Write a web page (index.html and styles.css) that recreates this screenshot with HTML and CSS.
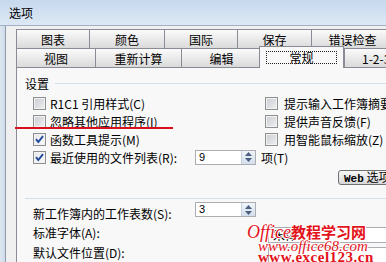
FILE: index.html
```html
<!DOCTYPE html>
<html lang="zh-CN">
<head>
<meta charset="utf-8">
<title>选项</title>
<link rel="stylesheet" href="styles.css">
</head>
<body>
<div class="titlebar">选项</div>
<div class="client">
  <div class="frame"></div>
  <div class="body">
    <div class="tabrow row1">
      <div class="tab t-chart">图表</div>
      <div class="tab t-color">颜色</div>
      <div class="tab t-intl">国际</div>
      <div class="tab t-save">保存</div>
      <div class="tab t-err">错误检查</div>
    </div>
    <div class="tabrow row2">
      <div class="tab t-view">视图</div>
      <div class="tab t-calc">重新计算</div>
      <div class="tab t-edit">编辑</div>
      <div class="tab active"><span class="focus">常规</span></div>
      <div class="tab t-123">1-2-3 的帮助</div>
    </div>
    <div class="panel">
      <div class="group-head"><span>设置</span><i class="rule"></i></div>
      <div class="opts">
        <div class="row">
          <div class="opt left"><span class="cb"></span>R1C1 引用样式(C)</div>
          <div class="opt right"><span class="cb"></span>提示输入工作簿摘要信息(P)</div>
        </div>
        <div class="row">
          <div class="opt left"><span class="cb"></span>忽略其他应用程序(I)</div>
          <div class="opt right"><span class="cb"></span>提供声音反馈(F)</div>
        </div>
        <div class="row">
          <div class="opt left"><span class="cb checked"><svg viewBox="0 0 13 13" width="13" height="13"><path d="M3 6.2 L5.3 9 L10 3.2" fill="none" stroke="#21479a" stroke-width="1.9"/></svg></span>函数工具提示(M)</div>
          <div class="opt right"><span class="cb"></span>用智能鼠标缩放(Z)</div>
        </div>
        <div class="row">
          <div class="opt recent"><span class="cb checked"><svg viewBox="0 0 13 13" width="13" height="13"><path d="M3 6.2 L5.3 9 L10 3.2" fill="none" stroke="#21479a" stroke-width="1.9"/></svg></span>最近使用的文件列表(R):</div>
          <div class="spin"><span class="val">9</span><span class="arrows"><svg viewBox="0 0 7 4" width="7" height="4"><path d="M0 4 L3.5 0 L7 4Z" fill="#4b5e80"/></svg><svg viewBox="0 0 7 4" width="7" height="4"><path d="M0 0 L3.5 4 L7 0Z" fill="#4b5e80"/></svg></span></div>
          <span class="unit">项(T)</span>
        </div>
      </div>
      <div class="btnrow"><button class="webbtn"><span class="mono">Web</span> 选项(P)...</button></div>
      <div class="sep"></div>
      <div class="fields">
        <div class="frow">
          <span class="flabel">新工作簿内的工作表数(S):</span>
          <div class="spin"><span class="val">3</span><span class="arrows"><svg viewBox="0 0 7 4" width="7" height="4"><path d="M0 4 L3.5 0 L7 4Z" fill="#4b5e80"/></svg><svg viewBox="0 0 7 4" width="7" height="4"><path d="M0 0 L3.5 4 L7 0Z" fill="#4b5e80"/></svg></span></div>
        </div>
        <div class="frow">
          <span class="flabel wide">标准字体(A):</span>
          <div class="combo">宋体</div>
        </div>
        <div class="frow">
          <span class="flabel wide">默认文件位置(D):</span>
          <div class="combo"></div>
        </div>
      </div>
    </div>
  </div>
</div>
<div class="annot"></div>
<div class="wm wm3">www.excel123.cn</div>
<div class="wm wm2">www.office68.com</div>
<div class="wm wm1"><span class="lat">Office</span><span class="cjk">教程学习网</span></div>
</body>
</html>
```
FILE: styles.css
```css
* { box-sizing: border-box; }
body {
  margin: 0;
  width: 386px;
  height: 262px;
  overflow: hidden;
  position: relative;
  background: #f0f0f0;
  font-family: "Noto Sans CJK SC", "Noto Sans", sans-serif;
  font-size: 12px;
  color: #000;
}
.titlebar {
  height: 26px;
  padding-left: 9px;
  line-height: 25px;
  background: linear-gradient(#c7d9ee, #dce8f5);
  border-bottom: 1px solid #9fb0c4;
}
.client { display: flex; height: 236px; }
.frame {
  width: 6px;
  background: linear-gradient(90deg, #dce6f1, #cfdbe9);
  border-right: 1px solid #8e9cad;
}
.body { flex: 1; min-width: 0; padding: 3px 0 0 10px; }

.tabrow { display: flex; height: 19px; align-items: flex-start; }
.tab {
  flex: none;
  height: 19px;
  border: 1px solid #898c95;
  border-width: 1px 0 0 1px;
  background: linear-gradient(#fbfbfb, #ececec 45%, #dadada);
  text-align: center;
  line-height: 16px;
  padding-top: 2px;
  white-space: nowrap;
  overflow: hidden;
}
.t-chart { width: 73px; }
.t-color { width: 75px; }
.t-intl { width: 73px; }
.t-save { width: 74px; }
.t-err { width: 82px; }
.t-view { width: 79px; }
.t-calc { width: 86px; }
.t-edit { width: 80px; }
.t-123 { width: 90px; text-align: left; padding-left: 17px; }
.tab.active {
  position: relative;
  z-index: 1;
  width: 85px;
  height: 22px;
  margin-top: -2px;
  margin-left: -2px;
  border-width: 1px 1px 0 1px;
  background: #f8f8f8;
  padding-top: 4px;
  display: flex;
  justify-content: center;
  align-items: flex-start;
}
.focus {
  display: block;
  width: 71px;
  height: 13px;
  line-height: 11px;
  border: 1px dotted #222;
  text-align: center;
}

.panel {
  height: 200px;
  border-top: 1px solid #898c95;
  border-left: 1px solid #898c95;
  background: #f8f8f8;
  padding: 7px 0 0 8px;
}
.group-head { display: flex; align-items: center; height: 16px; }
.group-head .rule { flex: 1; height: 1px; background: #d5dfe5; margin-left: 6px; }

.opts { margin-top: 3px; padding-left: 8px; }
.row { display: flex; align-items: center; height: 18px; }
.opt { flex: none; display: flex; align-items: center; white-space: nowrap; }
.opt.left { width: 232px; }
.opt.recent { width: 162px; }
.cb {
  flex: none;
  width: 13px;
  height: 13px;
  margin-right: 4px;
  border: 1px solid #8e8f8f;
  background: linear-gradient(135deg, #c9ccd1, #eef0f2);
  box-shadow: inset 0 0 0 1px #f2f2f2;
}
.opt.right .cb { margin-right: 6px; }
.cb.checked { background: linear-gradient(135deg, #e4e6e9, #fafafa); }
.cb svg { display: block; margin: -1px; }

.spin {
  flex: none;
  display: flex;
  width: 61px;
  height: 15px;
  border: 1px solid #abadb3;
  background: #fff;
}
.spin .val { flex: 1; padding-left: 3px; line-height: 13px; font-size: 11px; font-family: "Liberation Sans", sans-serif; }
.arrows {
  width: 14px;
  display: flex;
  flex-direction: column;
  align-items: center;
  justify-content: center;
  gap: 2px;
  border-left: 1px solid #c3cfdd;
  background: linear-gradient(#f0f4f9, #d3dfec);
}
.arrows svg { display: block; }
.unit { margin-left: 5px; }

.btnrow { display: flex; margin-top: 4px; padding-left: 313px; height: 15px; }
.webbtn {
  flex: none;
  display: block;
  width: 110px;
  height: 15px;
  margin: 0;
  padding: 0 0 0 5px;
  border: 1px solid #707070;
  border-radius: 3px;
  background: linear-gradient(#f7f7f7, #e8e8e8 50%, #d7d7d7);
  font-family: "Noto Sans CJK SC", sans-serif;
  font-size: 12px;
  line-height: 12px;
  text-align: left;
  color: #000;
  white-space: nowrap;
}
.mono { font-family: "Liberation Mono", monospace; font-size: 11px; font-weight: bold; }
.sep { margin-top: 13px; height: 1px; background: #d5dfe5; }

.fields { margin-top: 3px; padding-left: 8px; }
.frow { display: flex; align-items: flex-start; height: 20px; }
.flabel { flex: none; width: 162px; margin-top: 4px; line-height: 16px; white-space: nowrap; }
.flabel.wide { width: 235px; margin-top: 3px; }
.combo {
  flex: none;
  margin-top: 5px;
  width: 140px;
  height: 16px;
  border: 1px solid #abadb3;
  background: #fff;
  padding-left: 4px;
  line-height: 14px;
}

.annot {
  position: absolute;
  left: 15px;
  top: 127px;
  width: 158px;
  height: 2px;
  background: #d8101b;
}
.wm {
  position: absolute;
  white-space: nowrap;
  color: #e3131b;
  text-shadow: -1px 0 #fff, 1px 0 #fff, 0 -1px #fff, 0 1px #fff;
}
.wm1 { left: 247px; top: 223px; line-height: 18px; }
.wm1 .lat { font-family: "Liberation Serif", serif; font-style: italic; font-size: 18px; }
.wm1 .cjk { font-family: "Noto Sans CJK SC", sans-serif; font-weight: bold; font-size: 15px; }
.wm2 { left: 258px; top: 238px; font-family: "Liberation Serif", serif; font-style: italic; font-size: 15px; line-height: 16px; }
.wm3 { left: 258px; top: 249px; font-family: "Liberation Serif", serif; font-weight: bold; font-size: 15px; line-height: 16px; letter-spacing: 0.5px; text-shadow: none; }
```
